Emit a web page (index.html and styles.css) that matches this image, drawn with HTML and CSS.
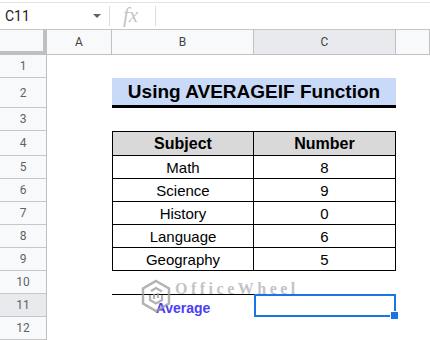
FILE: index.html
```html
<!DOCTYPE html>
<html lang="en">
<head>
    <meta charset="UTF-8">
    <meta name="viewport" content="width=device-width, initial-scale=1.0">
    <title>Using AVERAGEIF Function</title>
    <link rel="stylesheet" href="styles.css">
</head>
<body>
    <div class="formula-bar">
        <div class="name-box">
            <span>C11</span>
            <span class="caret"></span>
        </div>
        <div class="fx">fx</div>
        <div class="formula-input"></div>
    </div>

    <div class="sheet">
        <!-- column headers -->
        <div class="corner"></div>
        <div class="col-head">A</div>
        <div class="col-head">B</div>
        <div class="col-head active">C</div>
        <div class="col-head"></div>

        <!-- row 1 -->
        <div class="row-head">1</div>
        <div></div><div></div><div></div><div></div>

        <!-- row 2 -->
        <div class="row-head">2</div>
        <div></div>
        <div class="title">Using AVERAGEIF Function</div>
        <div></div>

        <!-- row 3 -->
        <div class="row-head">3</div>
        <div></div><div></div><div></div><div></div>

        <!-- row 4: table header -->
        <div class="row-head">4</div>
        <div></div>
        <div class="cell th first top">Subject</div>
        <div class="cell th top">Number</div>
        <div></div>

        <div class="row-head">5</div>
        <div></div>
        <div class="cell first">Math</div>
        <div class="cell">8</div>
        <div></div>

        <div class="row-head">6</div>
        <div></div>
        <div class="cell first">Science</div>
        <div class="cell">9</div>
        <div></div>

        <div class="row-head">7</div>
        <div></div>
        <div class="cell first">History</div>
        <div class="cell">0</div>
        <div></div>

        <div class="row-head">8</div>
        <div></div>
        <div class="cell first">Language</div>
        <div class="cell">6</div>
        <div></div>

        <div class="row-head">9</div>
        <div></div>
        <div class="cell first">Geography</div>
        <div class="cell">5</div>
        <div></div>

        <!-- row 10 -->
        <div class="row-head">10</div>
        <div></div><div></div><div></div><div></div>

        <!-- row 11 -->
        <div class="row-head active">11</div>
        <div></div>
        <div class="avg-label">Average</div>
        <div class="selected"><span class="handle"></span></div>
        <div></div>

        <!-- row 12 -->
        <div class="row-head">12</div>
        <div></div><div></div><div></div><div></div>

        <!-- watermark over the sheet -->
        <div class="watermark">
            <svg width="34" height="34" viewBox="0 0 34 34">
                <polygon points="17,2 30,9.5 30,24.5 17,32 4,24.5 4,9.5" fill="none" stroke="#9a9a9a" stroke-width="2.5"/>
                <path d="M12 12 L17 9 L23 12.5 M11 16 L11 21 L17 24.5 L23 21 L23 16 M15 15 L15 20 M19 14 L19 19" fill="none" stroke="#9a9a9a" stroke-width="2.2"/>
            </svg>
            <span>OfficeWheel</span>
        </div>
    </div>
</body>
</html>
```

FILE: styles.css
```css
body {
    margin: 0;
    font-family: Roboto, Arial, sans-serif;
    background-color: #fff;
    width: 430px;
    height: 340px;
    overflow: hidden;
}

.formula-bar {
    margin-top: 2px;
    height: 27px;
    border-top: 1px solid #e3e3e3;
    box-sizing: border-box;
    display: flex;
    align-items: center;
}

.name-box {
    width: 110px;
    height: 20px;
    padding: 0 8px 0 5px;
    box-sizing: border-box;
    display: flex;
    align-items: center;
    justify-content: space-between;
    border-right: 1px solid #dadce0;
    font-size: 14px;
    color: #202124;
}

.caret {
    width: 0;
    height: 0;
    border-left: 4px solid transparent;
    border-right: 4px solid transparent;
    border-top: 4px solid #5f6368;
}

.fx {
    width: 46px;
    height: 20px;
    box-sizing: border-box;
    padding-left: 13px;
    border-right: 1px solid #dadce0;
    font-family: "Liberation Serif", serif;
    font-style: italic;
    font-size: 21px;
    line-height: 18px;
    color: #c4c4c4;
}

.formula-input {
    flex: 1;
}

.sheet {
    position: relative;
    display: grid;
    grid-template-columns: 47px 65px 142px 142px 1fr;
    grid-template-rows: 26px 23px 30px 23px 25px repeat(8, 23px);
}

.sheet > div {
    box-sizing: border-box;
}

.corner {
    background-color: #f8f9fa;
    border-top: 1px solid #c7c7c7;
    border-right: 4px solid #c0c0c0;
    border-bottom: 4px solid #c0c0c0;
}

.col-head {
    background-color: #f8f9fa;
    border-top: 1px solid #c7c7c7;
    border-right: 1px solid #c0c0c0;
    border-bottom: 1px solid #c0c0c0;
    display: flex;
    align-items: center;
    justify-content: center;
    font-size: 12px;
    color: #444;
}

.row-head {
    background-color: #f8f9fa;
    border-right: 1px solid #c0c0c0;
    border-bottom: 1px solid #c7c7c7;
    display: flex;
    align-items: center;
    justify-content: center;
    font-size: 12px;
    color: #5f6368;
}

.col-head.active,
.row-head.active {
    background-color: #e8eaed;
}

.title {
    grid-column: 3 / 5;
    background-color: #c9daf8;
    border-bottom: 3px solid #000;
    display: flex;
    align-items: center;
    justify-content: center;
    font-family: "Liberation Sans", Arial, sans-serif;
    font-weight: bold;
    font-size: 19px;
    color: #000;
}

.cell {
    border-right: 1px solid #000;
    border-bottom: 1px solid #000;
    display: flex;
    align-items: center;
    justify-content: center;
    font-family: "Liberation Sans", Arial, sans-serif;
    font-size: 15px;
    color: #000;
}

.cell.first {
    border-left: 1px solid #000;
}

.cell.top {
    border-top: 1px solid #000;
}

.cell.th {
    background-color: #d9d9d9;
    font-weight: bold;
    font-size: 16px;
}

.avg-label {
    border-top: 1px solid #000;
    display: flex;
    align-items: flex-end;
    justify-content: center;
    padding-bottom: 1px;
    font-family: "Liberation Sans", Arial, sans-serif;
    font-weight: bold;
    font-size: 14px;
    line-height: 16px;
    color: #4b3df5;
}

.selected {
    position: relative;
    border: 2px solid #1a73e8;
}

.handle {
    position: absolute;
    right: -5px;
    bottom: -5px;
    width: 7px;
    height: 7px;
    background-color: #1a73e8;
    border: 1px solid #fff;
}

.watermark {
    position: absolute;
    left: 139px;
    top: 250px;
    display: flex;
    align-items: flex-start;
    gap: 2px;
    opacity: 0.75;
    pointer-events: none;
}

.watermark span {
    font-family: "Liberation Serif", serif;
    font-weight: bold;
    font-size: 16px;
    line-height: 18px;
    letter-spacing: 3.5px;
    color: #b0b0b8;
    margin-top: 1px;
}
```
